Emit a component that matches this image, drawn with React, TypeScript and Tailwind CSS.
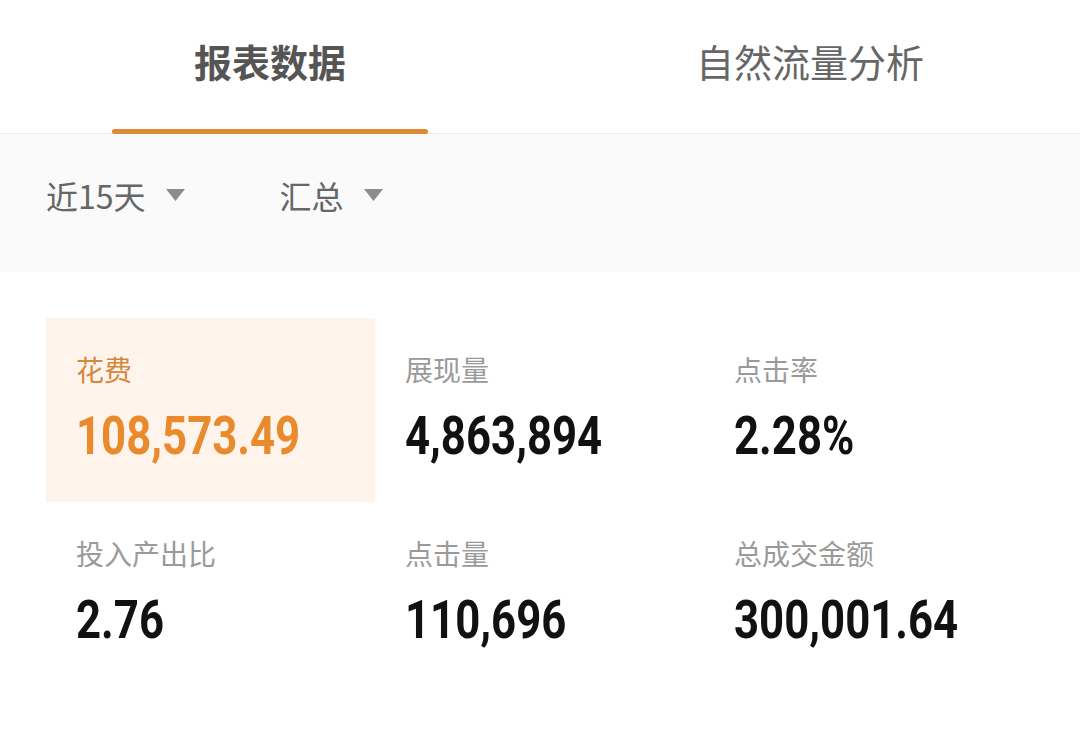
import React from "react";

const numFont = {
  fontFamily: 'Roboto, "Liberation Sans", sans-serif',
};

function Caret() {
  return (
    <svg width="21" height="14" viewBox="0 0 21 14" className="ml-[19px]">
      <path d="M1 1 L20 1 L10.5 13 Z" fill="#8c8c8c" />
    </svg>
  );
}

type Item = { label: string; value: string; active?: boolean };

const items: Item[] = [
  { label: "花费", value: "108,573.49", active: true },
  { label: "展现量", value: "4,863,894" },
  { label: "点击率", value: "2.28%" },
  { label: "投入产出比", value: "2.76" },
  { label: "点击量", value: "110,696" },
  { label: "总成交金额", value: "300,001.64" },
];

export default function App() {
  return (
    <div
      className="w-[1080px] h-[731px] bg-white overflow-hidden"
      style={{ fontFamily: '"Noto Sans CJK SC", "Noto Sans", sans-serif' }}
    >
      {/* Tabs */}
      <div className="flex h-[134px] border-b border-[#ececec]">
        <div className="relative w-[540px] flex justify-center pt-[36px]">
          <span className="text-[38px] leading-[50px] font-bold text-[#555555]">报表数据</span>
          <div className="absolute left-[112px] bottom-[-1px] w-[316px] h-[5px] rounded-full bg-[#dd8a36]" />
        </div>
        <div className="w-[540px] flex justify-center pt-[36px]">
          <span className="text-[38px] leading-[50px] text-[#666666]">自然流量分析</span>
        </div>
      </div>

      {/* Filters */}
      <div className="h-[138px] bg-[#fafafa] flex items-start pt-[39px] pl-[46px]">
        <div className="flex items-center h-[44px]">
          <span className="text-[32px] leading-[44px] text-[#666666]">近15天</span>
          <Caret />
        </div>
        <div className="flex items-center h-[44px] ml-[94px]">
          <span className="text-[32px] leading-[44px] text-[#666666]">汇总</span>
          <Caret />
        </div>
      </div>

      {/* Metrics */}
      <div className="grid grid-cols-[329px_329px_329px] grid-rows-[184px_184px] mt-[46px] ml-[46px]">
        {items.map((it) => (
          <div
            key={it.label}
            className={`pl-[30px] pt-[33px] ${it.active ? "bg-[#fff4ec]" : ""}`}
          >
            <div
              className={`text-[28px] leading-[36px] ${
                it.active ? "text-[#d3883e]" : "text-[#9a9a9a]"
              }`}
            >
              {it.label}
            </div>
            <div
              className={`mt-[19px] text-[54px] leading-[60px] font-bold origin-left scale-x-[0.81] whitespace-nowrap ${
                it.active ? "text-[#e98a2c]" : "text-[#111111]"
              }`}
              style={numFont}
            >
              {it.value}
            </div>
          </div>
        ))}
      </div>
    </div>
  );
}
